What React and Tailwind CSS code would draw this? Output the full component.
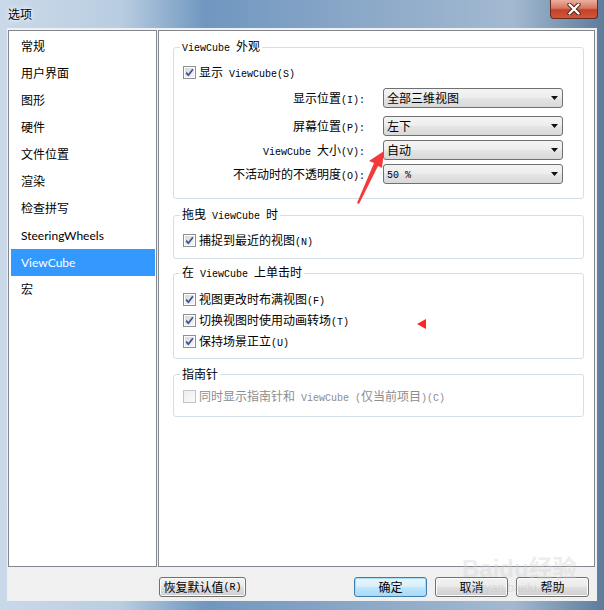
import React from 'react';

const MONO = "font-['Liberation_Mono','Noto_Sans_CJK_SC',monospace] text-[10px]";

// splits a label into CJK runs and ascii runs (ascii shown in a narrow mono face)
function Mixed({ text }) {
  const parts = text.split(/([\x20-\x7e]+)/).filter(Boolean);
  return parts.map((p, i) =>
    /^[\x20-\x7e]+$/.test(p) ? (
      <span key={i} className={MONO}>{p}</span>
    ) : (
      <span key={i}>{p}</span>
    )
  );
}

function Check({ checked = true, disabled = false }) {
  return (
    <span
      className={
        disabled
          ? 'w-[13px] h-[13px] shrink-0 border border-[#c4c4c4] bg-[linear-gradient(135deg,#eeeeee,#fafafa)]'
          : 'w-[13px] h-[13px] shrink-0 border border-[#8e8f8f] p-[1px] bg-white flex'
      }
    >
      {!disabled && (
        <span className="flex-1 flex items-center justify-center bg-[linear-gradient(135deg,#d5d8df,#f4f5f8)]">
          {checked && (
            <svg width="9" height="9" viewBox="0 0 9 9">
              <path d="M1.2 4.6 L3.4 7.2 L7.9 1.2" stroke="#3c4f8f" strokeWidth="1.7" fill="none" />
            </svg>
          )}
        </span>
      )}
    </span>
  );
}

function CheckRow({ label, disabled = false }) {
  return (
    <div className="h-[21px] flex items-center gap-[3px]">
      <Check disabled={disabled} checked={!disabled} />
      <span className={disabled ? 'text-[12px] text-[#8d8d8d]' : 'text-[12px] text-black'}>
        <Mixed text={label} />
      </span>
    </div>
  );
}

function Select({ label, value, className }) {
  return (
    <div className={`h-[20px] flex items-center justify-end pr-[20px] ${className}`}>
      <span className="text-[12px] text-black">
        <Mixed text={label} />
      </span>
      <div className="ml-[18px] w-[180px] h-[20px] border border-[#707070] rounded-[3px] bg-[linear-gradient(#f4f4f4_0%,#eeeeee_45%,#e3e3e3_55%,#d9d9d9_100%)] flex items-center pl-[3px] pr-[4px]">
        <span className="flex-1 text-[12px] leading-[18px] text-black">
          <Mixed text={value} />
        </span>
        <svg width="7" height="4" viewBox="0 0 7 4">
          <path d="M0 0H7L3.5 4Z" fill="#111" />
        </svg>
      </div>
    </div>
  );
}

function Group({ title, className = '', children }) {
  return (
    <fieldset className={`border border-[#d5dfe5] rounded-[3px] pl-[9px] ${className}`}>
      <legend className="-ml-[3px] px-[2px] text-[12px] leading-[14px] text-black">
        <Mixed text={title} />
      </legend>
      {children}
    </fieldset>
  );
}

function Button({ children, primary = false, className = '' }) {
  return (
    <div
      className={
        primary
          ? `w-[73px] h-[20px] rounded-[3px] border border-[#3c7fb1] shadow-[inset_0_0_0_1px_#a6dcf7] bg-[linear-gradient(#eaf6fd_0%,#d9f0fc_45%,#bee6fd_55%,#a7d9f5_100%)] flex items-center justify-center text-[12px] text-black ${className}`
          : `h-[20px] rounded-[3px] border border-[#707070] shadow-[inset_0_0_0_1px_#fcfcfc] bg-[linear-gradient(#f2f2f2_0%,#ebebeb_45%,#dddddd_55%,#cfcfcf_100%)] flex items-center justify-center text-[12px] text-black ${className}`
      }
    >
      {children}
    </div>
  );
}

const navItems = ['常规', '用户界面', '图形', '硬件', '文件位置', '渲染', '检查拼写', 'SteeringWheels', 'ViewCube', '宏'];

export default function App() {
  return (
    <div className="relative w-[604px] h-[610px] overflow-hidden flex flex-col font-['Noto_Sans_CJK_SC',sans-serif] bg-[linear-gradient(90deg,#cad9e9_0%,#b9cde1_20%,#7097c0_34%,#86a5c6_55%,#a3b9d1_85%,#5d7c9c_100%)]">
      {/* title bar */}
      <div className="h-[28px] shrink-0 flex items-start pl-[8px] pr-[6px]">
        <span className="mt-[5px] text-[12px] leading-[18px] text-black [text-shadow:0_0_6px_#ffffff,0_0_3px_#ffffff]">选项</span>
        <div className="ml-auto w-[48px] h-[19px] rounded-b-[4px] border border-t-0 border-[#6a2a1e] bg-[linear-gradient(#eab0a0_0%,#d8765e_45%,#c4412a_55%,#d2563b_100%)] flex items-center justify-center">
          <svg width="14" height="12" viewBox="0 0 14 12">
            <path d="M2.5 1.5 L11.5 10.5 M11.5 1.5 L2.5 10.5" stroke="#4b2219" strokeWidth="4.2" strokeLinecap="round" />
            <path d="M2.5 1.5 L11.5 10.5 M11.5 1.5 L2.5 10.5" stroke="#ffffff" strokeWidth="2.4" strokeLinecap="round" />
          </svg>
        </div>
      </div>

      {/* client area */}
      <div className="flex-1 mx-[7px] mb-[9px] bg-[#f0f0f0] flex flex-col">
        <div className="flex h-[539px] pt-[2px] pl-[1px] pr-[2px] gap-[1px]">
          {/* left list */}
          <div className="w-[149px] shrink-0 border border-[#828790] bg-white pt-[2px] pl-[2px] pr-[1px] font-['Lato','Noto_Sans_CJK_SC',sans-serif]">
            {navItems.map((item) => (
              <div
                key={item}
                className={
                  item === 'ViewCube'
                    ? 'h-[27px] flex items-center pl-[10px] text-[12px] bg-[#3399ff] text-white'
                    : 'h-[27px] flex items-center pl-[10px] text-[12px] text-black'
                }
              >
                {item}
              </div>
            ))}
          </div>

          {/* options panel */}
          <div className="flex-1 border border-[#828790] bg-white pt-[8px] pl-[14px] pr-[10px]">
            <Group title="ViewCube 外观" className="pb-[14px]">
              <div className="mt-[6px]">
                <CheckRow label="显示 ViewCube(S)" />
              </div>
              <Select label="显示位置(I):" value="全部三维视图" className="mt-[5px]" />
              <Select label="屏幕位置(P):" value="左下" className="mt-[8px]" />
              <Select label="ViewCube 大小(V):" value="自动" className="mt-[4px]" />
              <Select label="不活动时的不透明度(O):" value="50 %" className="mt-[4px]" />
            </Group>

            <Group title="拖曳 ViewCube 时" className="mt-[8px] pt-[6px] pb-[7px]">
              <CheckRow label="捕捉到最近的视图(N)" />
            </Group>

            <Group title="在 ViewCube 上单击时" className="mt-[6px] pt-[7px] pb-[6px]">
              <CheckRow label="视图更改时布满视图(F)" />
              <CheckRow label="切换视图时使用动画转场(T)" />
              <CheckRow label="保持场景正立(U)" />
            </Group>

            <Group title="指南针" className="mt-[8px] pt-[5px] pb-[9px]">
              <CheckRow label="同时显示指南针和 ViewCube (仅当前项目)(C)" disabled />
            </Group>
          </div>
        </div>

        {/* button bar */}
        <div className="flex-1 flex items-start pt-[10px] pl-[152px] pr-[8px]">
          <Button className="w-[87px]">
            <Mixed text="恢复默认值(R)" />
          </Button>
          <div className="ml-auto flex gap-[8px]">
            <Button primary>确定</Button>
            <Button className="w-[73px]">取消</Button>
            <Button className="w-[73px]">帮助</Button>
          </div>
        </div>
      </div>

      {/* annotation marks */}
      <svg className="absolute inset-0 pointer-events-none" width="604" height="610" viewBox="0 0 604 610">
        <path d="M384 151 L369 161 L374 163 L357 203 L359 204 L378 166 L382 168 Z" fill="#f23a3a" />
        <path d="M417 324 L426 319 L426 329 Z" fill="#ff2424" />
      </svg>

      {/* watermark */}
      <div className="absolute left-[462px] top-[556px] pointer-events-none flex flex-col items-start opacity-40 whitespace-nowrap">
        <span className="text-[24px] leading-[26px] font-bold font-['Liberation_Sans','Noto_Sans_CJK_SC',sans-serif] text-[#d4d4d4]">Baidu经验</span>
        <span className="ml-[4px] text-[12px] leading-[13px] font-['Liberation_Sans',sans-serif] text-[#c4c4c4]">jingyan.baidu.com</span>
      </div>
    </div>
  );
}
